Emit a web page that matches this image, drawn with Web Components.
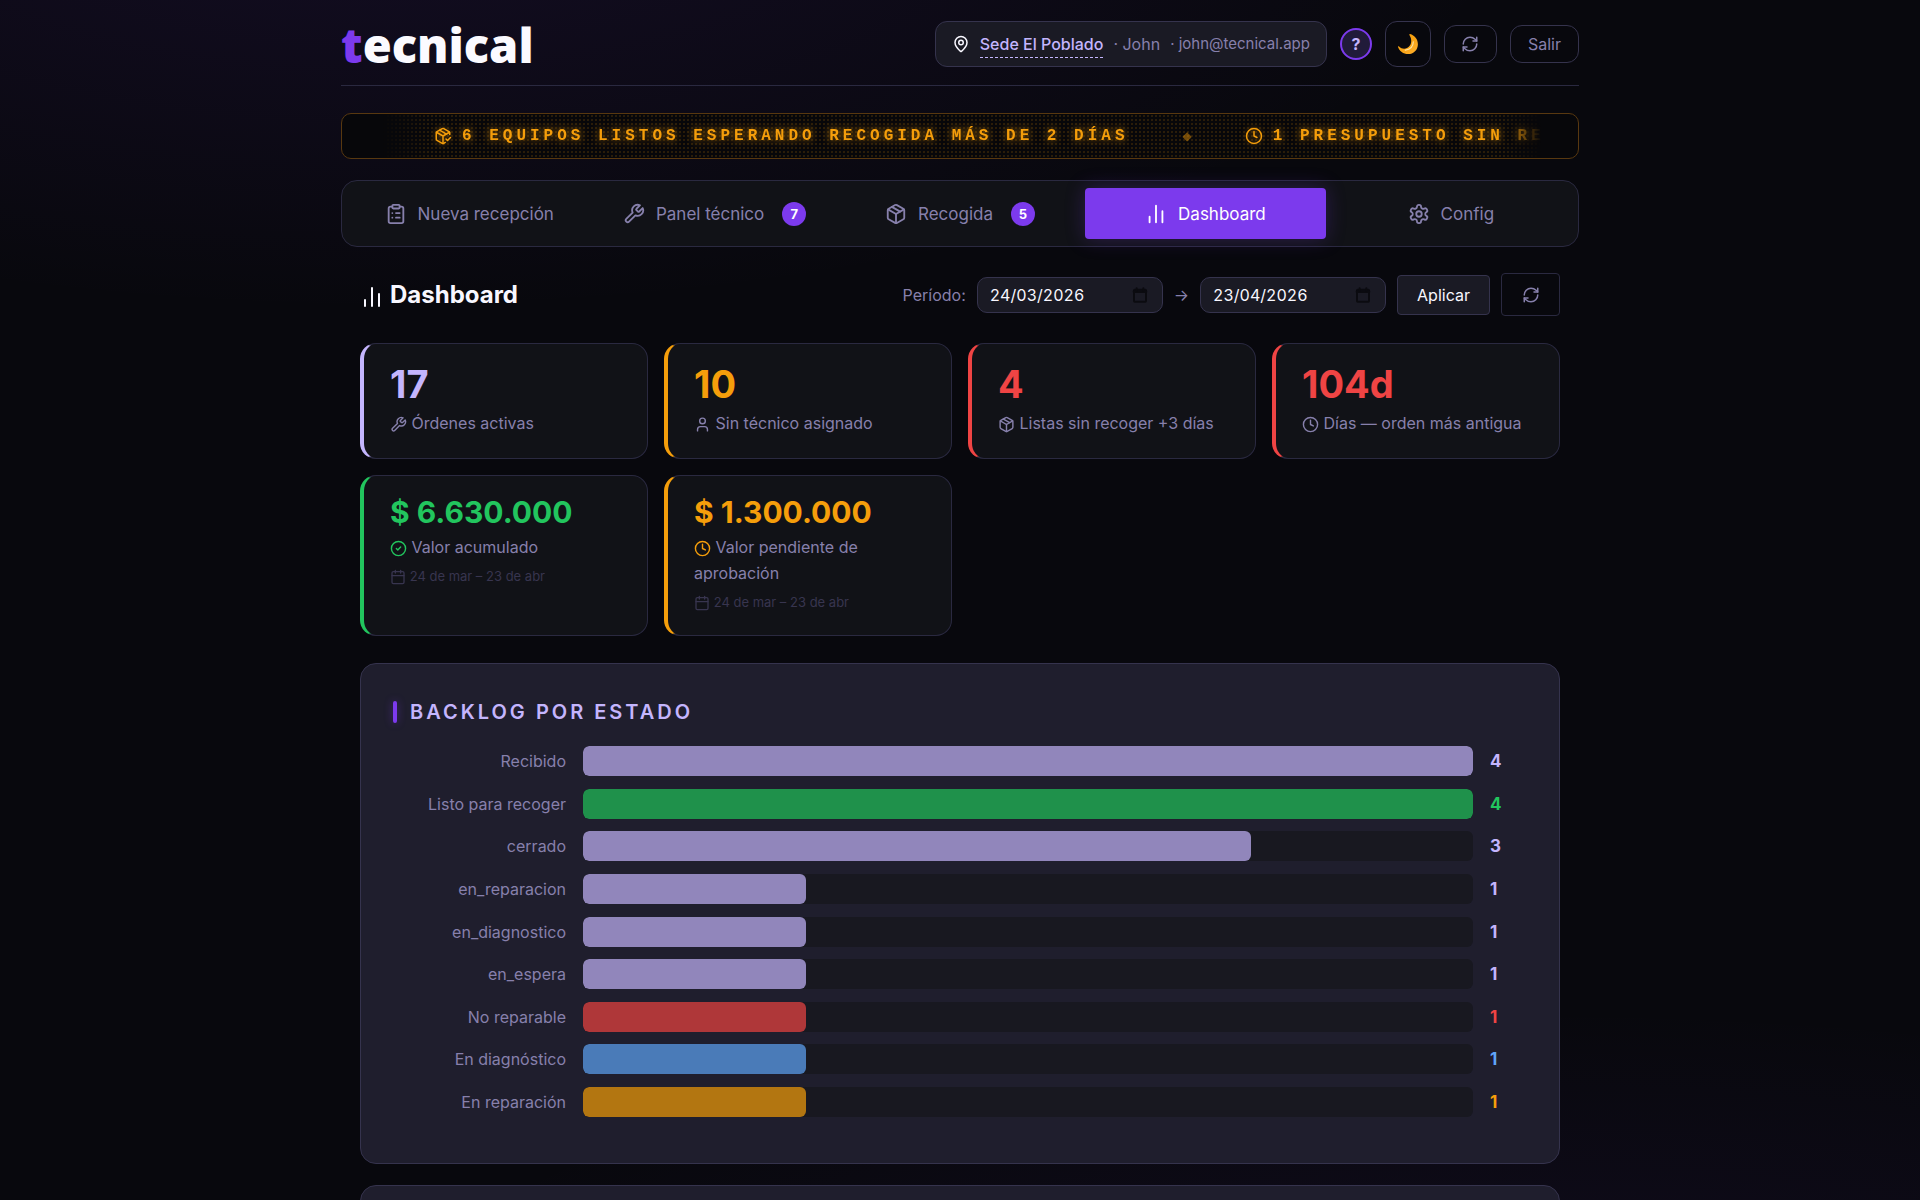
<!DOCTYPE html>
<html lang="es">
<head>
<meta charset="utf-8">
<title>tecnical · Dashboard</title>
<style>
  :root {
    --bg: #08080d;
    --surface: #111217;
    --raised: #1a1a24;
    --panel: #1f1e2d;
    --line: #2a2940;
    --line-strong: #35334d;
    --text: #f8f7ff;
    --muted: #8780ac;
    --faint: #38354f;
    --violet: #7c3aed;
    --lavender: #c4b5fd;
    --amber: #f59e0b;
    --red: #ef4444;
    --green: #22c55e;
    --blue: #60a5fa;
  }
  body {
    margin: 0;
    height: 100vh;
    overflow: hidden;
    color: var(--text);
    font: 16px/26px Inter, "Liberation Sans", sans-serif;
    background:
      radial-gradient(ellipse 60% 36% at 20% -10%, rgba(124, 58, 237, .1), transparent),
      radial-gradient(ellipse 60% 26% at 80% 110%, rgba(124, 58, 237, .07), transparent),
      var(--bg);
    background-attachment: fixed;
  }
</style>
</head>
<body>
<tecnical-app></tecnical-app>

<script>
const ICONS = {
  pin: '<path d="M20 10c0 4.99-5.54 10.19-7.4 11.8a1 1 0 0 1-1.2 0C9.54 20.19 4 14.99 4 10a8 8 0 0 1 16 0"/><circle cx="12" cy="10" r="3"/>',
  refresh: '<path d="M3 12a9 9 0 0 1 9-9 9.75 9.75 0 0 1 6.74 2.74L21 8"/><path d="M21 3v5h-5"/><path d="M21 12a9 9 0 0 1-9 9 9.75 9.75 0 0 1-6.74-2.74L3 16"/><path d="M8 16H3v5"/>',
  clipboard: '<rect width="8" height="4" x="8" y="2" rx="1"/><path d="M16 4h2a2 2 0 0 1 2 2v14a2 2 0 0 1-2 2H6a2 2 0 0 1-2-2V6a2 2 0 0 1 2-2h2"/><path d="M12 11h4M12 16h4M8 11h.01M8 16h.01"/>',
  wrench: '<path d="M14.7 6.3a1 1 0 0 0 0 1.4l1.6 1.6a1 1 0 0 0 1.4 0l3.77-3.77a6 6 0 0 1-7.94 7.94l-6.91 6.91a2.12 2.12 0 0 1-3-3l6.91-6.91a6 6 0 0 1 7.94-7.94l-3.76 3.76z"/>',
  box: '<path d="M11 21.73a2 2 0 0 0 2 0l7-4A2 2 0 0 0 21 16V8a2 2 0 0 0-1-1.73l-7-4a2 2 0 0 0-2 0l-7 4A2 2 0 0 0 3 8v8a2 2 0 0 0 1 1.73z"/><path d="M12 22V12"/><path d="M3.29 7 12 12l8.71-5"/><path d="m7.5 4.27 9 5.15"/>',
  boxCheck: '<path d="m16 16 2 2 4-4"/><path d="M21 10V8a2 2 0 0 0-1-1.73l-7-4a2 2 0 0 0-2 0l-7 4A2 2 0 0 0 3 8v8a2 2 0 0 0 1 1.73l7 4a2 2 0 0 0 2 0l2-1.14"/><path d="m7.5 4.27 9 5.15"/><path d="M3.29 7 12 12l8.71-5M12 22V12"/>',
  bars: '<path d="M5 21v-6M12 21V3M19 21V9"/>',
  gear: '<path d="M12.22 2h-.44a2 2 0 0 0-2 2v.18a2 2 0 0 1-1 1.73l-.43.25a2 2 0 0 1-2 0l-.15-.08a2 2 0 0 0-2.73.73l-.22.38a2 2 0 0 0 .73 2.73l.15.1a2 2 0 0 1 1 1.72v.51a2 2 0 0 1-1 1.74l-.15.09a2 2 0 0 0-.73 2.73l.22.38a2 2 0 0 0 2.73.73l.15-.08a2 2 0 0 1 2 0l.43.25a2 2 0 0 1 1 1.73V20a2 2 0 0 0 2 2h.44a2 2 0 0 0 2-2v-.18a2 2 0 0 1 1-1.73l.43-.25a2 2 0 0 1 2 0l.15.08a2 2 0 0 0 2.73-.73l.22-.39a2 2 0 0 0-.73-2.73l-.15-.08a2 2 0 0 1-1-1.74v-.5a2 2 0 0 1 1-1.74l.15-.09a2 2 0 0 0 .73-2.73l-.22-.38a2 2 0 0 0-2.73-.73l-.15.08a2 2 0 0 1-2 0l-.43-.25a2 2 0 0 1-1-1.73V4a2 2 0 0 0-2-2z"/><circle cx="12" cy="12" r="3"/>',
  user: '<path d="M19 21v-2a4 4 0 0 0-4-4H9a4 4 0 0 0-4 4v2"/><circle cx="12" cy="7" r="4"/>',
  clock: '<circle cx="12" cy="12" r="10"/><path d="M12 6v6l4 2"/>',
  check: '<circle cx="12" cy="12" r="10"/><path d="m9 12 2 2 4-4"/>',
  calendar: '<path d="M8 2v4M16 2v4"/><rect width="18" height="18" x="3" y="4" rx="2"/><path d="M3 10h18"/>',
  picker: '<rect width="18" height="18" x="3" y="4" rx="1" stroke-width="3"/><path stroke-width="4" d="M3 7h18"/><path stroke-width="3" d="M7 2v3M17 2v3"/>',
  moon: '<defs><linearGradient id="m" x1="0" y1="0" x2="1" y2="1"><stop offset=".3" stop-color="#f59e0b"/><stop offset="1" stop-color="#ffb02e"/></linearGradient></defs><path fill="url(#m)" stroke="none" d="M14.2 1.2c5 1.5 8.6 5.6 8.6 11 0 6.200-4.700 10.800-10.700 10.800-5.200 0-9.600-3.200-11.100-8 .2-.8 1-.7 1.500-.1 2 2.100 5.600 3 8.900 1.200 4.400-2.400 5.500-8.200 2.400-13.400-.5-.8-.4-1.500.4-1.500z"/><path fill="none" stroke="#ffe3a0" stroke-width="1.300" d="M9 18.600c5-.4 8.600-3.600 8.800-9"/>'
};

class UiIcon extends HTMLElement {
  constructor() {
    super();
    this.attachShadow({ mode: "open" });
  }
  connectedCallback() {
    this.shadowRoot.innerHTML = `
      <style>
        :host { display: inline-block; flex: none; width: 18px; height: 18px; }
        svg { display: block; width: 100%; height: 100%; fill: none; stroke: currentColor;
              stroke-width: 2; stroke-linecap: round; stroke-linejoin: round; }
      </style>
      <svg viewBox="0 0 24 24" aria-hidden="true">${ICONS[this.getAttribute("name")]}</svg>`;
  }
}

class AppHeader extends HTMLElement {
  constructor() {
    super();
    this.attachShadow({ mode: "open" }).innerHTML = `
      <style>
        :host { display: flex; align-items: center; justify-content: space-between;
                padding: 21px 0 18px; border-bottom: 1px solid var(--line); }
        .logo { padding-top: 2px; font: 800 47px/44px "Open Sans", "Noto Sans", sans-serif;
                color: #fbfaff; text-decoration: none; }
        .logo span { color: var(--violet); }
        .tools { display: flex; align-items: center; gap: 13px; color: var(--muted); }
        .place { display: flex; align-items: center; gap: 10px; box-sizing: border-box; height: 46px;
                 padding: 0 16px; border: 1px solid var(--line-strong); border-radius: 12px;
                 background: var(--raised); }
        .place ui-icon { color: var(--text); }
        .mail { font-size: 15px; }
        button { box-sizing: border-box; display: grid; place-items: center; margin: 0; padding: 0;
                 font: inherit; color: inherit; background: var(--bg);
                 border: 1px solid var(--line-strong); border-radius: 12px; }
        .place button { border: 0; border-bottom: 1px dashed var(--lavender); border-radius: 0; background: none;
                        color: var(--lavender); font-weight: 500; line-height: 26px; }
        .help { width: 32px; height: 32px; border: 2px solid var(--violet); border-radius: 50%;
                background: #211b3a; color: var(--lavender); font-weight: 700; }
        .theme { width: 46px; height: 46px; }
        .theme ui-icon { width: 22px; height: 22px; }
        .refresh { width: 53px; height: 38px; }
        .exit { height: 38px; padding: 0 17px; }
      </style>
      <a class="logo" href="#"><span>t</span>ecnical</a>
      <div class="tools">
        <div class="place">
          <ui-icon name="pin"></ui-icon>
          <button type="button">Sede El Poblado</button>
          <span>· John</span>
          <span class="mail">· john@tecnical.app</span>
        </div>
        <button class="help" type="button">?</button>
        <button class="theme" type="button" aria-label="Tema"><ui-icon name="moon"></ui-icon></button>
        <button class="refresh" type="button" aria-label="Actualizar"><ui-icon name="refresh"></ui-icon></button>
        <button class="exit" type="button">Salir</button>
      </div>`;
  }
}

// LED style notice strip, dotted background, both ends fade out
class LedTicker extends HTMLElement {
  constructor() {
    super();
    this.attachShadow({ mode: "open" }).innerHTML = `
      <style>
        :host { display: block; border: 1px solid #583810; border-radius: 10px;
                background: #07070a; overflow: hidden; }
        .strip { display: flex; align-items: center; height: 44px; padding-left: 92px;
                 white-space: nowrap; overflow: hidden;
                 font: 700 16px/24px "Courier New", "Liberation Mono", monospace;
                 letter-spacing: 4px; color: var(--amber);
                 text-shadow: 0 0 8px rgba(245, 158, 11, .8);
                 background: radial-gradient(circle, rgba(245, 158, 11, .15) 1px, transparent 1px) 0 0 / 4px 4px;
                 -webkit-mask-image: linear-gradient(90deg, transparent 40px, #000 90px, #000 calc(100% - 78px), transparent calc(100% - 36px));
                 mask-image: linear-gradient(90deg, transparent 40px, #000 90px, #000 calc(100% - 78px), transparent calc(100% - 36px)); }
      </style>
      <div class="strip"><slot></slot></div>`;
  }
}

class LedItem extends HTMLElement {
  connectedCallback() {
    this.attachShadow({ mode: "open" }).innerHTML = `
      <style>
        :host { display: flex; align-items: center; gap: 10px; flex: none; }
        ui-icon { filter: drop-shadow(0 0 3px rgba(245, 158, 11, .5)); }
        :host::after { content: "◆"; font: 12px/24px "DejaVu Sans", sans-serif; letter-spacing: 0;
                       text-shadow: none; opacity: .45; margin: 0 53px 0 44px; }
      </style>
      <ui-icon name="${this.getAttribute("icon")}"></ui-icon><span><slot></slot></span>`;
  }
}

class NavTab extends HTMLElement {
  connectedCallback() {
    const badge = this.getAttribute("badge");
    this.attachShadow({ mode: "open" }).innerHTML = `
      <style>
        :host { display: block; flex: 1 1 0; }
        button { display: flex; align-items: center; justify-content: center; gap: 11px;
                 width: 100%; height: 51px; margin: 0; padding: 0; border: 0; border-radius: 4px;
                 background: none; color: var(--muted); font: inherit; font-size: 17px; }
        :host([active]) button { background: var(--violet); color: #fff;
                                 box-shadow: 0 0 20px rgba(124, 58, 237, .25); }
        ui-icon { width: 22px; height: 22px; }
        .badge { width: 24px; margin-left: 7px; border-radius: 50%; background: var(--violet);
                 color: #fff; font-size: 13px; font-weight: 700; line-height: 24px; }
      </style>
      <button type="button"><ui-icon name="${this.getAttribute("icon")}"></ui-icon><slot></slot>
      ${badge ? `<span class="badge">${badge}</span>` : ""}</button>`;
  }
}

class NavBar extends HTMLElement {
  constructor() {
    super();
    this.attachShadow({ mode: "open" }).innerHTML = `
      <style>
        :host { display: block; }
        nav { display: flex; gap: 5px; padding: 7px; border: 1px solid var(--line);
              border-radius: 16px; background: var(--surface); }
      </style>
      <nav><slot></slot></nav>`;
  }
}

class PeriodBar extends HTMLElement {
  constructor() {
    super();
    this.attachShadow({ mode: "open" }).innerHTML = `
      <style>
        :host { display: flex; align-items: center; justify-content: space-between; }
        h1 { display: flex; align-items: center; gap: 6px; margin: 0; font-size: 24px; line-height: 38px; }
        h1 ui-icon { width: 24px; height: 24px; padding-top: 4px; }
        form { display: flex; align-items: center; gap: 11px; color: var(--muted); }
        .date { display: flex; align-items: center; box-sizing: border-box; width: 186px; height: 36px;
                padding: 0 14px 0 12px; border: 1px solid var(--line-strong); border-radius: 10px;
                background: var(--raised); }
        .date ui-icon { color: #0b0b10; width: 16px; height: 16px; }
        input { flex: 1; min-width: 0; padding: 0; border: 0; outline: 0; background: none;
                color: var(--text); font: inherit; font-variant-numeric: tabular-nums; }
        button { box-sizing: border-box; margin: 0; padding: 0; font: inherit; border-radius: 4px; }
        .apply { width: 93px; height: 40px; border: 1px solid var(--line-strong);
                 background: var(--raised); color: var(--text); }
        .reload { display: grid; place-items: center; width: 59px; height: 43px;
                  border: 1px solid var(--line); background: none; color: var(--muted); }
      </style>
      <h1><ui-icon name="bars"></ui-icon>Dashboard</h1>
      <form>
        <label for="from">Período:</label>
        <span class="date"><input id="from" value="24/03/2026"><ui-icon name="picker"></ui-icon></span>
        <label for="to">→</label>
        <span class="date"><input id="to" value="23/04/2026"><ui-icon name="picker"></ui-icon></span>
        <button class="apply" type="button">Aplicar</button>
        <button class="reload" type="button" aria-label="Recargar"><ui-icon name="refresh"></ui-icon></button>
      </form>`;
  }
}

class StatCard extends HTMLElement {
  connectedCallback() {
    const period = this.getAttribute("period");
    this.attachShadow({ mode: "open" }).innerHTML = `
      <style>
        :host { display: block; padding: 21px 26px 22px; border: 1px solid var(--line);
                border-left: 4px solid var(--tone); border-radius: 16px; background: var(--surface); }
        .value { color: var(--tone); font-size: 38px; font-weight: 700; line-height: 38px; margin-bottom: 7px; }
        :host([money]) .value { font-size: 30px; line-height: 30px; }
        .label { color: var(--muted); }
        .label ui-icon { width: 17px; height: 17px; vertical-align: -4px; }
        :host([money]) .label ui-icon { color: var(--tone); }
        .period { color: var(--faint); font-size: 13px; line-height: 21px; margin-top: 6px; }
        .period ui-icon { width: 16px; height: 16px; vertical-align: -4px; }
      </style>
      <div class="value">${this.getAttribute("value")}</div>
      <div class="label"><ui-icon name="${this.getAttribute("icon")}"></ui-icon> <slot></slot></div>
      ${period ? `<div class="period"><ui-icon name="calendar"></ui-icon> ${period}</div>` : ""}`;
  }
}

class UiPanel extends HTMLElement {
  connectedCallback() {
    this.attachShadow({ mode: "open" }).innerHTML = `
      <style>
        :host { display: block; padding: 32px 32px 46px; border: 1px solid var(--line-strong);
                border-radius: 16px; background: var(--panel); }
        h2 { display: flex; align-items: center; gap: 13px; margin: 0 0 18px; color: var(--lavender);
             font-size: 20px; font-weight: 600; line-height: 32px; letter-spacing: 3px; text-transform: uppercase; }
        h2::before { content: ""; width: 4px; height: 22px; border-radius: 2px;
                     background: var(--violet); box-shadow: 0 0 8px rgba(124, 58, 237, .4); }
      </style>
      <h2>${this.getAttribute("heading")}</h2>
      <slot></slot>`;
  }
}

class BarChart extends HTMLElement {
  constructor() {
    super();
    this.attachShadow({ mode: "open" }).innerHTML = `
      <style>
        :host { display: flex; flex-direction: column; justify-content: space-between; min-height: 371px; }
      </style>
      <slot></slot>`;
  }
}

class BarRow extends HTMLElement {
  connectedCallback() {
    const count = Number(this.getAttribute("count"));
    this.attachShadow({ mode: "open" }).innerHTML = `
      <style>
        :host { display: grid; grid-template-columns: 173px 1fr 37px; align-items: center; gap: 17px;
                --c: var(--tone, var(--lavender)); }
        .label { color: var(--muted); text-align: right; }
        .track { height: 30px; border-radius: 6px; background: #181820; overflow: hidden; }
        .fill { width: ${count * 25}%; height: 100%; border-radius: 6px; background: var(--c); opacity: .7; }
        .count { color: var(--c); font-size: 17px; font-weight: 700; }
      </style>
      <span class="label"><slot></slot></span>
      <div class="track"><div class="fill"></div></div>
      <span class="count">${count}</span>`;
  }
}

class TecnicalApp extends HTMLElement {
  constructor() {
    super();
    this.attachShadow({ mode: "open" }).innerHTML = `
      <style>
        :host { display: block; max-width: 1238px; margin: 0 auto; }
        led-ticker { margin: 27px 0 21px; }
        main { padding: 26px 19px; }
        .cards { display: grid; grid-template-columns: repeat(4, 1fr); gap: 16px; margin: 27px 0; }
        ui-panel { margin-bottom: 21px; }
        .lavender { --tone: var(--lavender); }
        .amber { --tone: var(--amber); }
        .red { --tone: var(--red); }
        .green { --tone: var(--green); }
        .blue { --tone: var(--blue); }
      </style>
      <app-header></app-header>
      <led-ticker>
        <led-item icon="boxCheck">6 EQUIPOS LISTOS ESPERANDO RECOGIDA MÁS DE 2 DÍAS</led-item>
        <led-item icon="clock">1 PRESUPUESTO SIN RE</led-item>
      </led-ticker>
      <nav-bar>
        <nav-tab icon="clipboard">Nueva recepción</nav-tab>
        <nav-tab icon="wrench" badge="7">Panel técnico</nav-tab>
        <nav-tab icon="box" badge="5">Recogida</nav-tab>
        <nav-tab icon="bars" active>Dashboard</nav-tab>
        <nav-tab icon="gear">Config</nav-tab>
      </nav-bar>
      <main>
        <period-bar></period-bar>
        <div class="cards">
          <stat-card class="lavender" value="17" icon="wrench">Órdenes activas</stat-card>
          <stat-card class="amber" value="10" icon="user">Sin técnico asignado</stat-card>
          <stat-card class="red" value="4" icon="box">Listas sin recoger +3 días</stat-card>
          <stat-card class="red" value="104d" icon="clock">Días — orden más antigua</stat-card>
          <stat-card class="green" money value="$ 6.630.000" icon="check" period="24 de mar – 23 de abr">Valor acumulado</stat-card>
          <stat-card class="amber" money value="$ 1.300.000" icon="clock" period="24 de mar – 23 de abr">Valor pendiente de aprobación</stat-card>
        </div>
        <ui-panel heading="Backlog por estado">
          <bar-chart>
            <bar-row count="4">Recibido</bar-row>
            <bar-row count="4" class="green">Listo para recoger</bar-row>
            <bar-row count="3">cerrado</bar-row>
            <bar-row count="1">en_reparacion</bar-row>
            <bar-row count="1">en_diagnostico</bar-row>
            <bar-row count="1">en_espera</bar-row>
            <bar-row count="1" class="red">No reparable</bar-row>
            <bar-row count="1" class="blue">En diagnóstico</bar-row>
            <bar-row count="1" class="amber">En reparación</bar-row>
          </bar-chart>
        </ui-panel>
        <ui-panel heading=""></ui-panel>
      </main>`;
  }
}

customElements.define("ui-icon", UiIcon);
customElements.define("app-header", AppHeader);
customElements.define("led-ticker", LedTicker);
customElements.define("led-item", LedItem);
customElements.define("nav-tab", NavTab);
customElements.define("nav-bar", NavBar);
customElements.define("period-bar", PeriodBar);
customElements.define("stat-card", StatCard);
customElements.define("ui-panel", UiPanel);
customElements.define("bar-chart", BarChart);
customElements.define("bar-row", BarRow);
customElements.define("tecnical-app", TecnicalApp);
</script>
</body>
</html>
